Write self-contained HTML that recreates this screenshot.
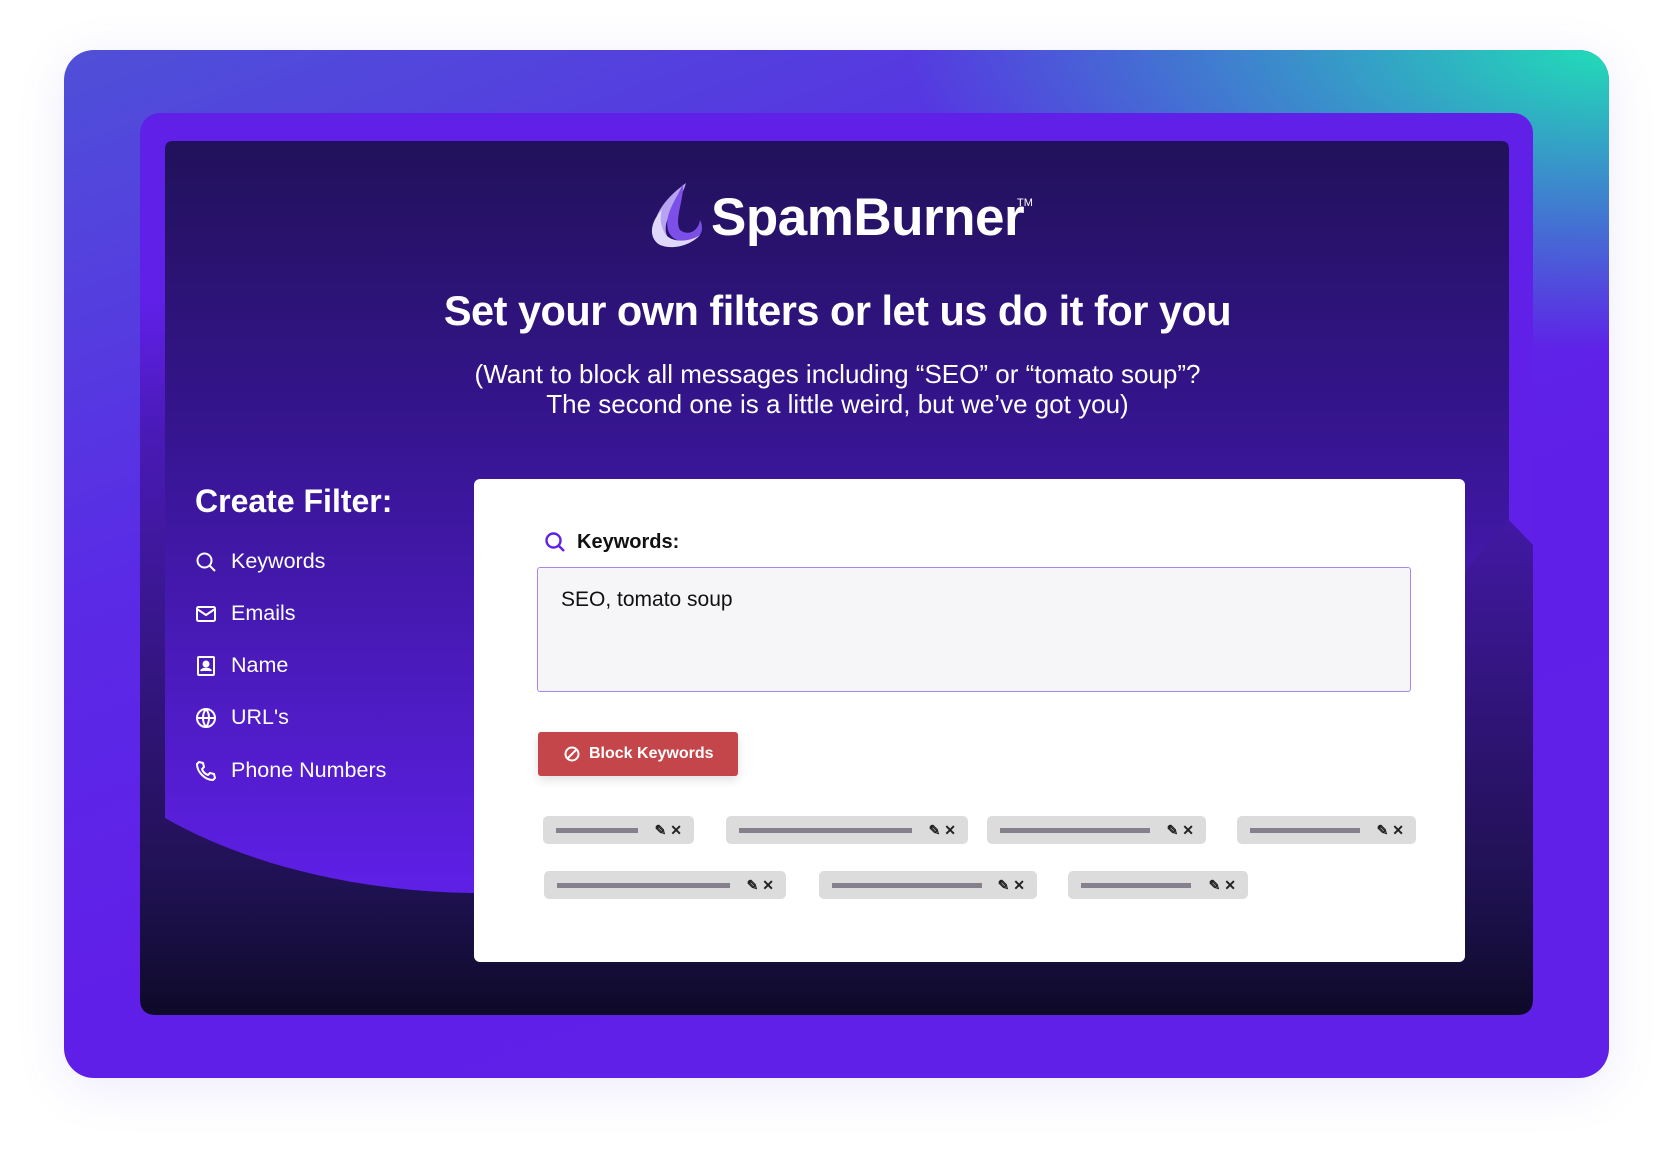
<!DOCTYPE html>
<html><head><meta charset="utf-8"><style>
*{margin:0;padding:0;box-sizing:border-box}
body{width:1672px;height:1157px;background:#fff;position:relative;overflow:hidden;font-family:"Liberation Sans",sans-serif}
.abs{position:absolute}
.outer{left:64px;top:50px;width:1545px;height:1028px;border-radius:30px;background:linear-gradient(160deg,#4f50d8 0%,#5a2ae6 35%,#601fe8 60%,#6020e8 100%);box-shadow:0 10px 50px rgba(110,90,220,0.12);overflow:hidden}
.teal{left:64px;top:50px;width:1545px;height:1028px;border-radius:30px;background:radial-gradient(ellipse 700px 300px at 100% 0%,rgba(30,230,180,0.95),rgba(30,230,180,0) 100%)}
.t{color:#fff;white-space:nowrap}
.item{left:195px;font-size:21.5px;color:#fff;height:26px;line-height:26px;width:260px;white-space:nowrap}
.item svg{position:absolute;left:0;top:3px}
.item span{position:absolute;left:36px}
.tag{position:absolute;height:28px;background:#dcdcdc;border-radius:5px}
.tag .bar{position:absolute;left:13px;top:12px;height:5px;background:#86808c}
.tag .ic{position:absolute;top:7px;right:12px;font-size:14px;line-height:14px;color:#222;font-weight:bold}
</style></head><body>
<div class="abs outer"></div>
<div class="abs teal"></div>
<svg class="abs" style="left:0;top:0" width="1672" height="1157">
<defs>
<linearGradient id="ga" x1="0" y1="141" x2="0" y2="900" gradientUnits="userSpaceOnUse">
<stop offset="0" stop-color="#21115a"/><stop offset="0.4" stop-color="#371592"/><stop offset="1" stop-color="#5f20e8"/></linearGradient>
<linearGradient id="gb" x1="0" y1="300" x2="0" y2="1015" gradientUnits="userSpaceOnUse">
<stop offset="0" stop-color="#6020e8"/><stop offset="0.182" stop-color="#4a1ab8"/><stop offset="0.727" stop-color="#261260"/><stop offset="0.829" stop-color="#1e1150"/><stop offset="1" stop-color="#0e0a28"/></linearGradient>
</defs>
<rect x="140" y="113" width="1393" height="902" rx="20" fill="#6020e8"/>
<path d="M140,300 L165,300 L165,520 L1509,520 L1533,545 L1533,999 Q1533,1015 1517,1015 L156,1015 Q140,1015 140,999 Z" fill="url(#gb)"/>
<path d="M173,141 H1501 Q1509,141 1509,149 V520 L1462,575 V893 H480 C380,893 260,872 165,818 V149 Q165,141 173,141 Z" fill="url(#ga)"/>
<!-- flame -->
<path d="M686,183 C668,196 652,214 655,232 C657,244 668,249 680,246 C668,243 662,232 668,218 C672,206 682,198 686,183 Z" fill="#b7a4f0"/>
<path d="M683,184 C676,200 664,214 668,230 C671,240 682,244 694,240 C702,236 704,228 700,220 C698,232 688,236 680,230 C674,220 684,200 683,184 Z" fill="#7b4fe8"/>
<path d="M662,210 C650,222 648,238 660,245 C672,250 690,246 700,235 C690,242 670,244 664,232 C660,224 660,216 662,210 Z" fill="#e0d8fa"/>
</svg>
<div class="abs t" style="left:711px;top:188px;font-size:53px;font-weight:bold;letter-spacing:-0.5px;line-height:60px">SpamBurner</div>
<div class="abs t" style="left:1017px;top:197px;font-size:11px">TM</div>
<div class="abs t" style="left:0;width:1675px;text-align:center;top:287px;font-size:41.5px;font-weight:bold;letter-spacing:-0.5px;line-height:48px">Set your own filters or let us do it for you</div>
<div class="abs t" style="left:0;width:1675px;text-align:center;top:359px;font-size:26px;line-height:30px">(Want to block all messages including “SEO” or “tomato soup”?<br>The second one is a little weird, but we’ve got you)</div>
<div class="abs t" style="left:195px;top:482px;font-size:32px;font-weight:bold;line-height:38px">Create Filter:</div>
<div class="abs item" style="top:548px"><svg width="22" height="22" viewBox="0 0 22 22" fill="none" stroke="#fff" stroke-width="2"><circle cx="9.5" cy="9.5" r="7"/><path d="M14.5 14.5L20 20"/></svg><span>Keywords</span></div>
<div class="abs item" style="top:600px"><svg width="22" height="22" viewBox="0 0 22 22" fill="none" stroke="#fff" stroke-width="2"><rect x="2" y="4" width="18" height="14" rx="1.5"/><path d="M2 6l9 6 9-6"/></svg><span>Emails</span></div>
<div class="abs item" style="top:652px"><svg width="22" height="22" viewBox="0 0 22 22" fill="none" stroke="#fff" stroke-width="2"><rect x="3" y="2" width="16" height="18" rx="1"/><circle cx="11" cy="9" r="2.5" fill="#fff"/><path d="M6 16c1-3 9-3 10 0" fill="#fff"/></svg><span>Name</span></div>
<div class="abs item" style="top:704px"><svg width="22" height="22" viewBox="0 0 22 22" fill="none" stroke="#fff" stroke-width="2"><circle cx="11" cy="11" r="9"/><path d="M2 11h18M11 2c-4 5-4 13 0 18M11 2c4 5 4 13 0 18"/></svg><span>URL's</span></div>
<div class="abs item" style="top:757px"><svg width="22" height="22" viewBox="0 0 22 22" fill="none" stroke="#fff" stroke-width="2"><path d="M4 2l4 1 1 4-2 2c1 3 3 5 6 6l2-2 4 1 1 4-2 2C10 20 2 12 2 4z"/></svg><span>Phone Numbers</span></div>
<div class="abs" style="left:474px;top:479px;width:991px;height:483px;background:#fff;border-radius:6px"></div>
<svg class="abs" style="left:544px;top:531px" width="22" height="22" viewBox="0 0 22 22" fill="none" stroke="#6020e8" stroke-width="2.4"><circle cx="9.5" cy="9.5" r="7"/><path d="M14.5 14.5L20 20"/></svg>
<div class="abs" style="left:577px;top:529px;font-size:20px;font-weight:bold;color:#111;line-height:26px">Keywords:</div>
<div class="abs" style="left:537px;top:567px;width:874px;height:125px;background:#f6f6f8;border:1.5px solid #a985f0;border-radius:3px"></div>
<div class="abs" style="left:561px;top:587px;font-size:21px;color:#111;line-height:26px">SEO, tomato soup</div>
<div class="abs" style="left:538px;top:732px;width:200px;height:44px;background:#c4464a;border-radius:3px;box-shadow:0 4px 10px rgba(0,0,0,0.12)"></div>
<svg class="abs" style="left:564px;top:746px" width="16" height="16" viewBox="0 0 16 16" fill="none" stroke="#fff" stroke-width="2"><circle cx="8" cy="8" r="6.5"/><path d="M3.5 12.5l9-9"/></svg>
<div class="abs t" style="left:589px;top:743px;font-size:16px;font-weight:bold;line-height:22px">Block Keywords</div>
<div class="tag" style="left:543px;top:816px;width:151px"><div class="bar" style="width:82px"></div><div class="ic">✎ ✕</div></div>
<div class="tag" style="left:726px;top:816px;width:242px"><div class="bar" style="width:173px"></div><div class="ic">✎ ✕</div></div>
<div class="tag" style="left:987px;top:816px;width:219px"><div class="bar" style="width:150px"></div><div class="ic">✎ ✕</div></div>
<div class="tag" style="left:1237px;top:816px;width:179px"><div class="bar" style="width:110px"></div><div class="ic">✎ ✕</div></div>
<div class="tag" style="left:544px;top:871px;width:242px"><div class="bar" style="width:173px"></div><div class="ic">✎ ✕</div></div>
<div class="tag" style="left:819px;top:871px;width:218px"><div class="bar" style="width:150px"></div><div class="ic">✎ ✕</div></div>
<div class="tag" style="left:1068px;top:871px;width:180px"><div class="bar" style="width:110px"></div><div class="ic">✎ ✕</div></div>
</body></html>
